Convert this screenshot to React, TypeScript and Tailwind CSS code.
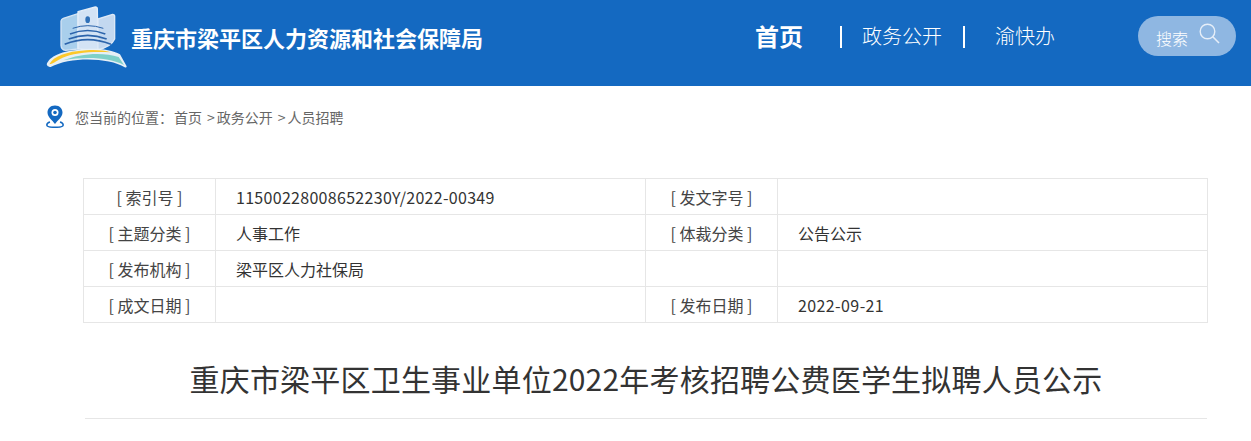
const cjk = "font-['Noto_Sans_CJK_SC','Noto_Sans_CJK_JP',sans-serif]";

const rows = [
  ["[ 索引号 ]", "11500228008652230Y/2022-00349", "[ 发文字号 ]", ""],
  ["[ 主题分类 ]", "人事工作", "[ 体裁分类 ]", "公告公示"],
  ["[ 发布机构 ]", "梁平区人力社保局", "", ""],
  ["[ 成文日期 ]", "", "[ 发布日期 ]", "2022-09-21"],
];

function Logo() {
  // drawn in 3x coordinates of the reference crop
  return (
    <svg width="82" height="64" viewBox="50 14 246 192" className="shrink-0">
      <path d="M95 62 Q96 56 102 54 L146 40 L146 146 L108 150 Q96 148 95 135 Z" fill="#a9cfec" stroke="#d5e5f4" strokeWidth="4" strokeLinejoin="round" />
      <path d="M146 34 L198 20 Q204 20 204 26 L206 150 L146 146 Z" fill="#d3e3f5" stroke="#e3edf8" strokeWidth="4" strokeLinejoin="round" />
      <path d="M206 56 L250 42 Q256 42 256 48 L256 116 Q245 140 206 148 Z" fill="#c3d8f0" stroke="#dce8f6" strokeWidth="4" strokeLinejoin="round" />
      <ellipse cx="175" cy="58" rx="7" ry="10" fill="#2f70b8" />
      <path d="M130 84 Q175 68 222 84" fill="none" stroke="#2c64ab" strokeWidth="3" />
      <path d="M122 101 Q175 80 228 101" fill="none" stroke="#2c64ab" strokeWidth="5" />
      <path d="M118 116 Q175 94 232 116" fill="none" stroke="#2c64ab" strokeWidth="5" />
      <path d="M106 132 Q175 104 245 132" fill="none" stroke="#2c64ab" strokeWidth="5" />
      <path d="M52 192 C62 168 90 152 170 146 C215 144 250 150 272 162 L292 198 Q292 203 286 201 C240 172 125 168 64 200 Q54 202 52 192 Z" fill="#e6eff6" />
      <path d="M60 192 C72 168 110 154 170 150 C200 148 225 150 244 156 C190 152 130 158 100 172 C84 180 72 190 60 192 Z" fill="#fcc82b" />
      <path d="M102 180 C150 160 220 154 268 170 L284 194 C240 170 165 168 102 180 Z" fill="#7fd0c8" />
    </svg>
  );
}

function PinIcon() {
  return (
    <svg width="18" height="23" viewBox="1 0 18 23" className="shrink-0">
      <path d="M10 0.500 C5 0.500 2.500 4 2.500 7.500 C2.500 12 7.500 15.500 10 19 C12.500 15.500 17.500 12 17.500 7.500 C17.500 4 15 0.500 10 0.500 Z" fill="#1469c1" />
      <circle cx="10" cy="7.500" r="3.500" fill="#fff" />
      <circle cx="10" cy="7.500" r="1.800" fill="#1469c1" />
      <path d="M5 17 C3 17.500 1.800 19 1.800 20 C1.800 21.500 5 22.300 10 22.300 C15 22.300 18.200 21.500 18.200 20 C18.200 19 17 17.500 15 17" fill="none" stroke="#1469c1" strokeWidth="1.500" />
    </svg>
  );
}

function SearchIcon() {
  return (
    <svg width="21" height="21" viewBox="0 0 21 21" fill="none" className="shrink-0 mb-[6px]">
      <circle cx="8.500" cy="8.500" r="7.300" stroke="#e6eef8" strokeWidth="1.400" />
      <path d="M13.800 13.800 L20 20" stroke="#e6eef8" strokeWidth="1.600" />
    </svg>
  );
}

export default function App() {
  return (
    <div className={`w-[1251px] h-[441px] overflow-hidden bg-white ${cjk}`}>
      {/* Header */}
      <header className="h-[86px] bg-[#1469c1] flex items-center text-white">
        <div className="pl-[46px] w-[131px] mb-[12px]">
          <Logo />
        </div>
        <h1 className="text-[22px] font-bold leading-none w-[624px] mb-[12px] whitespace-nowrap">
          重庆市梁平区人力资源和社会保障局
        </h1>
        <nav className="flex items-center mb-[14px]">
          <a className="text-[24px] font-bold w-[85px] leading-none">首页</a>
          <span className="w-[2px] h-[22px] bg-white mt-[2px]" />
          <a className="text-[20px] font-light leading-none ml-[20px] w-[101px] whitespace-nowrap">政务公开</a>
          <span className="w-[2px] h-[22px] bg-white mt-[2px]" />
          <a className="text-[20px] font-light leading-none ml-[30px] whitespace-nowrap">渝快办</a>
        </nav>
        <button className="ml-[83px] w-[98px] h-[40px] rounded-full bg-[#8fb7e2] flex items-center pl-[18px] gap-[11px] mb-[14px]">
          <span className="text-[16px] font-light leading-none mt-[3px] whitespace-nowrap">搜索</span>
          <SearchIcon />
        </button>
      </header>

      {/* Breadcrumb */}
      <div className="h-[92px] pl-[46px] pt-[19px] flex items-start gap-[11px] text-[14px] text-[#666] leading-none">
        <PinIcon />
        <div className="mt-[5px] whitespace-nowrap">
          <span>您当前的位置：</span>
          <span className="ml-[1px]">首页</span>
          <span className="ml-[5px]">&gt;<span className="ml-[2px]">政务公开</span></span>
          <span className="ml-[5px]">&gt;<span className="ml-[2px]">人员招聘</span></span>
        </div>
      </div>

      {/* Meta table */}
      <table className="ml-[83px] w-[1125px] table-fixed border-collapse text-[16px] text-[#333] leading-none">
        <colgroup>
          <col className="w-[132px]" />
          <col className="w-[430px]" />
          <col className="w-[132px]" />
          <col />
        </colgroup>
        <tbody>
          {rows.map((r, i) => (
            <tr key={i} className="h-[36px]">
              <td className="border border-[#e6e6e6] text-center text-[#444]">{r[0]}</td>
              <td className={`border border-[#e6e6e6] pl-[20px] ${i === 0 ? "tracking-[0.3px]" : ""}`}>{r[1]}</td>
              <td className="border border-[#e6e6e6] text-center text-[#444]">{r[2]}</td>
              <td className={`border border-[#e6e6e6] pl-[20px] ${i === 3 ? "tracking-[0.4px]" : ""}`}>{r[3]}</td>
            </tr>
          ))}
        </tbody>
      </table>

      {/* Title */}
      <h2 className="mt-[33px] mx-[85px] w-[1122px] pb-[18px] border-b border-[#e6e6e6] text-center text-[30px] tracking-[0.2px] leading-[44px] text-[#333] whitespace-nowrap">
        重庆市梁平区卫生事业单位2022年考核招聘公费医学生拟聘人员公示
      </h2>
    </div>
  );
}
